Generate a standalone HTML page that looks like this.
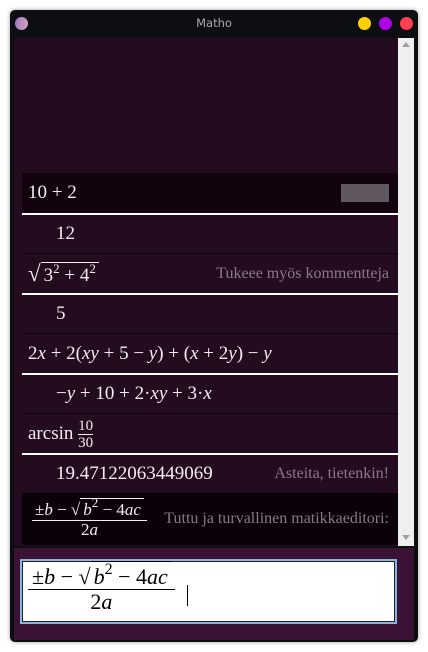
<!DOCTYPE html>
<html><head><meta charset="utf-8"><style>
*{margin:0;padding:0;box-sizing:border-box}
body{width:428px;height:652px;background:#fff;position:relative;overflow:hidden;font-family:"Liberation Serif",serif}
.win{position:absolute;left:10px;top:10px;width:408px;height:632px;background:#0d0e12;border-radius:5px;box-shadow:0 0 4px rgba(0,0,0,.4)}
.title{position:absolute;left:0;top:0;width:408px;height:28px;text-align:center;line-height:27px;font-family:"DejaVu Sans",sans-serif;font-size:11.5px;color:#aaa}
.dot{position:absolute;top:7px;width:13px;height:13px;border-radius:50%}
.content{position:absolute;left:14px;top:38px;width:384px;height:508px;background:#230c20;overflow:hidden}
.sb{position:absolute;left:398px;top:38px;width:16px;height:508px;background:#efefef}
.row{position:absolute;left:22px;width:376px;color:#f2eef0;font-size:19px;white-space:nowrap}
.c{position:absolute;right:9px;color:#8a7a88;font-size:16px}
.w{position:absolute;left:22px;width:376px;height:2px;background:#fff}
.t{position:absolute;left:22px;width:376px;height:1px;background:#0a0208}
i{font-style:italic}
.fr{display:inline-block;vertical-align:middle;text-align:center;white-space:nowrap}
.fr>span{display:block;line-height:1.1}
.fr>.n{border-bottom:1px solid currentColor}
.sq{border-top:1px solid currentColor;padding:2px 3px 0;display:inline-block;line-height:1.1}
sup{font-size:13px;vertical-align:8px;line-height:0}
.panel{position:absolute;left:14px;top:548px;width:400px;height:92px;background:#3a1233}
.inp{position:absolute;left:20px;top:559px;width:377px;height:65px;background:#fff;border:2px solid #8ab4dc;box-shadow:inset 0 0 0 1px #222}
</style></head><body>
<div class="win">
<div class="title">Matho</div>
<div class="dot" style="left:5px;background:linear-gradient(90deg,#9c7bc0,#d6a0c0)"></div>
<div class="dot" style="left:348px;background:#ffd000"></div>
<div class="dot" style="left:369px;background:#b000e8"></div>
<div class="dot" style="left:390px;background:#ff4050"></div>
</div>
<div class="content"></div>
<div class="sb"><div style="position:absolute;left:4px;top:4px;border:4px solid transparent;border-bottom:5px solid #a0a0a0;border-top:0"></div><div style="position:absolute;left:4px;top:497px;border:4px solid transparent;border-top:5px solid #a0a0a0;border-bottom:0"></div></div>

<div class="row" style="top:173px;height:40px;background:#12030f;line-height:40px;padding-left:6px">10 + 2<div style="position:absolute;left:319px;top:11px;width:48px;height:18px;background:#605860"></div></div>
<div class="w" style="top:213px"></div>
<div class="row" style="top:215px;height:38px;line-height:38px;padding-left:34px">12</div>
<div class="t" style="top:253px"></div>
<div class="row" style="top:254px;height:39px;line-height:39px;padding-left:6px"><span style="font-size:23px">√</span><span class="sq" style="line-height:1.2">3<sup>2</sup> + 4<sup>2</sup></span><span class="c">Tukeee myös kommentteja</span></div>
<div class="w" style="top:293px"></div>
<div class="row" style="top:295px;height:38px;line-height:38px;padding-left:34px">5</div>
<div class="t" style="top:333px"></div>
<div class="row" style="top:334px;height:39px;line-height:39px;padding-left:6px">2<i>x</i> + 2(<i>xy</i> + 5 − <i>y</i>) + (<i>x</i> + 2<i>y</i>) − <i>y</i></div>
<div class="w" style="top:373px"></div>
<div class="row" style="top:375px;height:38px;line-height:38px;padding-left:34px">−<i>y</i> + 10 + 2·<i>xy</i> + 3·<i>x</i></div>
<div class="t" style="top:413px"></div>
<div class="row" style="top:414px;height:39px;line-height:39px;padding-left:6px">arcsin <span class="fr" style="font-size:15px"><span class="n">10</span><span>30</span></span></div>
<div class="w" style="top:453px"></div>
<div class="row" style="top:455px;height:38px;line-height:38px;padding-left:34px">19.47122063449069<span class="c">Asteita, tietenkin!</span></div>
<div class="row" style="top:493px;height:52px;background:#0a0208;padding-left:10px;padding-top:5px;font-size:17px"><span class="fr"><span class="n" style="padding:0 3px">±<i>b</i> − √<span class="sq"><i>b</i><sup>2</sup> − 4<i>ac</i></span></span><span>2<i>a</i></span></span><span class="c" style="top:15px;line-height:22px">Tuttu ja turvallinen matikkaeditori:</span></div>

<div class="panel"></div>
<div class="inp"><div style="position:absolute;left:6px;top:0px;color:#000;font-size:22px"><span class="fr"><span class="n" style="padding:0 4px">±<i>b</i> − √<span class="sq" style="padding:3px 3px 0"><i>b</i><sup style="font-size:16px;vertical-align:10px">2</sup> − 4<i>ac</i></span></span><span>2<i>a</i></span></span></div><div style="position:absolute;left:165px;top:24px;width:1px;height:21px;background:#000"></div></div>
</body></html>
